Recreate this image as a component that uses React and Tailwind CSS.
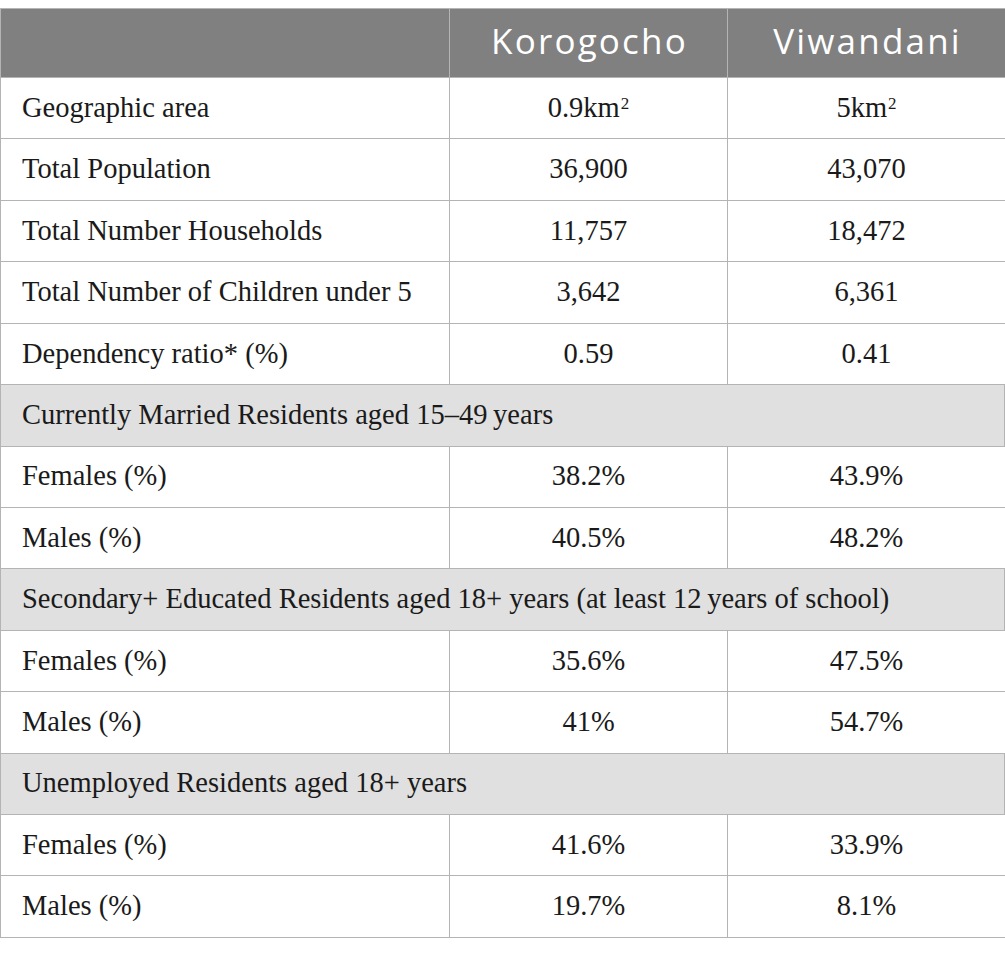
import React from "react";

const Sup = () => <sup className="text-[17px] relative -top-[4px] ml-[1px]">2</sup>;

const rows = [
  { t: "data", label: "Geographic area", a: <>0.9km<Sup /></>, b: <>5km<Sup /></> },
  { t: "data", label: "Total Population", a: "36,900", b: "43,070" },
  { t: "data", label: "Total Number Households", a: "11,757", b: "18,472" },
  { t: "data", label: "Total Number of Children under 5", a: "3,642", b: "6,361" },
  { t: "data", label: "Dependency ratio* (%)", a: "0.59", b: "0.41" },
  { t: "sec", label: "Currently Married Residents aged 15\u201349\u2009years" },
  { t: "data", label: "Females (%)", a: "38.2%", b: "43.9%" },
  { t: "data", label: "Males (%)", a: "40.5%", b: "48.2%" },
  { t: "sec", label: "Secondary+ Educated Residents aged 18+ years (at least 12\u2009years of school)" },
  { t: "data", label: "Females (%)", a: "35.6%", b: "47.5%" },
  { t: "data", label: "Males (%)", a: "41%", b: "54.7%" },
  { t: "sec", label: "Unemployed Residents aged 18+ years" },
  { t: "data", label: "Females (%)", a: "41.6%", b: "33.9%" },
  { t: "data", label: "Males (%)", a: "19.7%", b: "8.1%" },
];

export default function App() {
  return (
    <div className="w-[1005px] h-[954px] bg-white pt-[8px]">
      <div className="border-l border-t border-[#b4b4b4] w-[1005px] text-[#1a1a1a] font-['Liberation_Serif',serif]">
        <div className="grid grid-cols-[449px_278px_278px] h-[69px] bg-[#808080] text-white font-['Open_Sans',sans-serif]">
          <div className="border-r border-b border-[#b4b4b4]"></div>
          <div className="border-r border-b border-[#b4b4b4] flex items-center justify-center text-[35px] tracking-[2.2px] pb-[4px] pl-[2px]">Korogocho</div>
          <div className="border-r border-b border-[#b4b4b4] flex items-center justify-center text-[35px] tracking-[2.2px] pb-[4px] pl-[2px]">Viwandani</div>
        </div>
        {rows.map((r, i) =>
          r.t === "sec" ? (
            <div key={i} className="h-[61.43px] bg-[#e0e0e0] border-r border-b border-[#b4b4b4] flex items-center pl-[21px] text-[28.5px] whitespace-nowrap">
              {r.label}
            </div>
          ) : (
            <div key={i} className="grid grid-cols-[449px_278px_278px] h-[61.43px] text-[28.5px]">
              <div className="border-r border-b border-[#b4b4b4] flex items-center pl-[21px] whitespace-nowrap">{r.label}</div>
              <div className="border-r border-b border-[#b4b4b4] flex items-center justify-center whitespace-nowrap">{r.a}</div>
              <div className="border-r border-b border-[#b4b4b4] flex items-center justify-center whitespace-nowrap">{r.b}</div>
            </div>
          )
        )}
      </div>
    </div>
  );
}
